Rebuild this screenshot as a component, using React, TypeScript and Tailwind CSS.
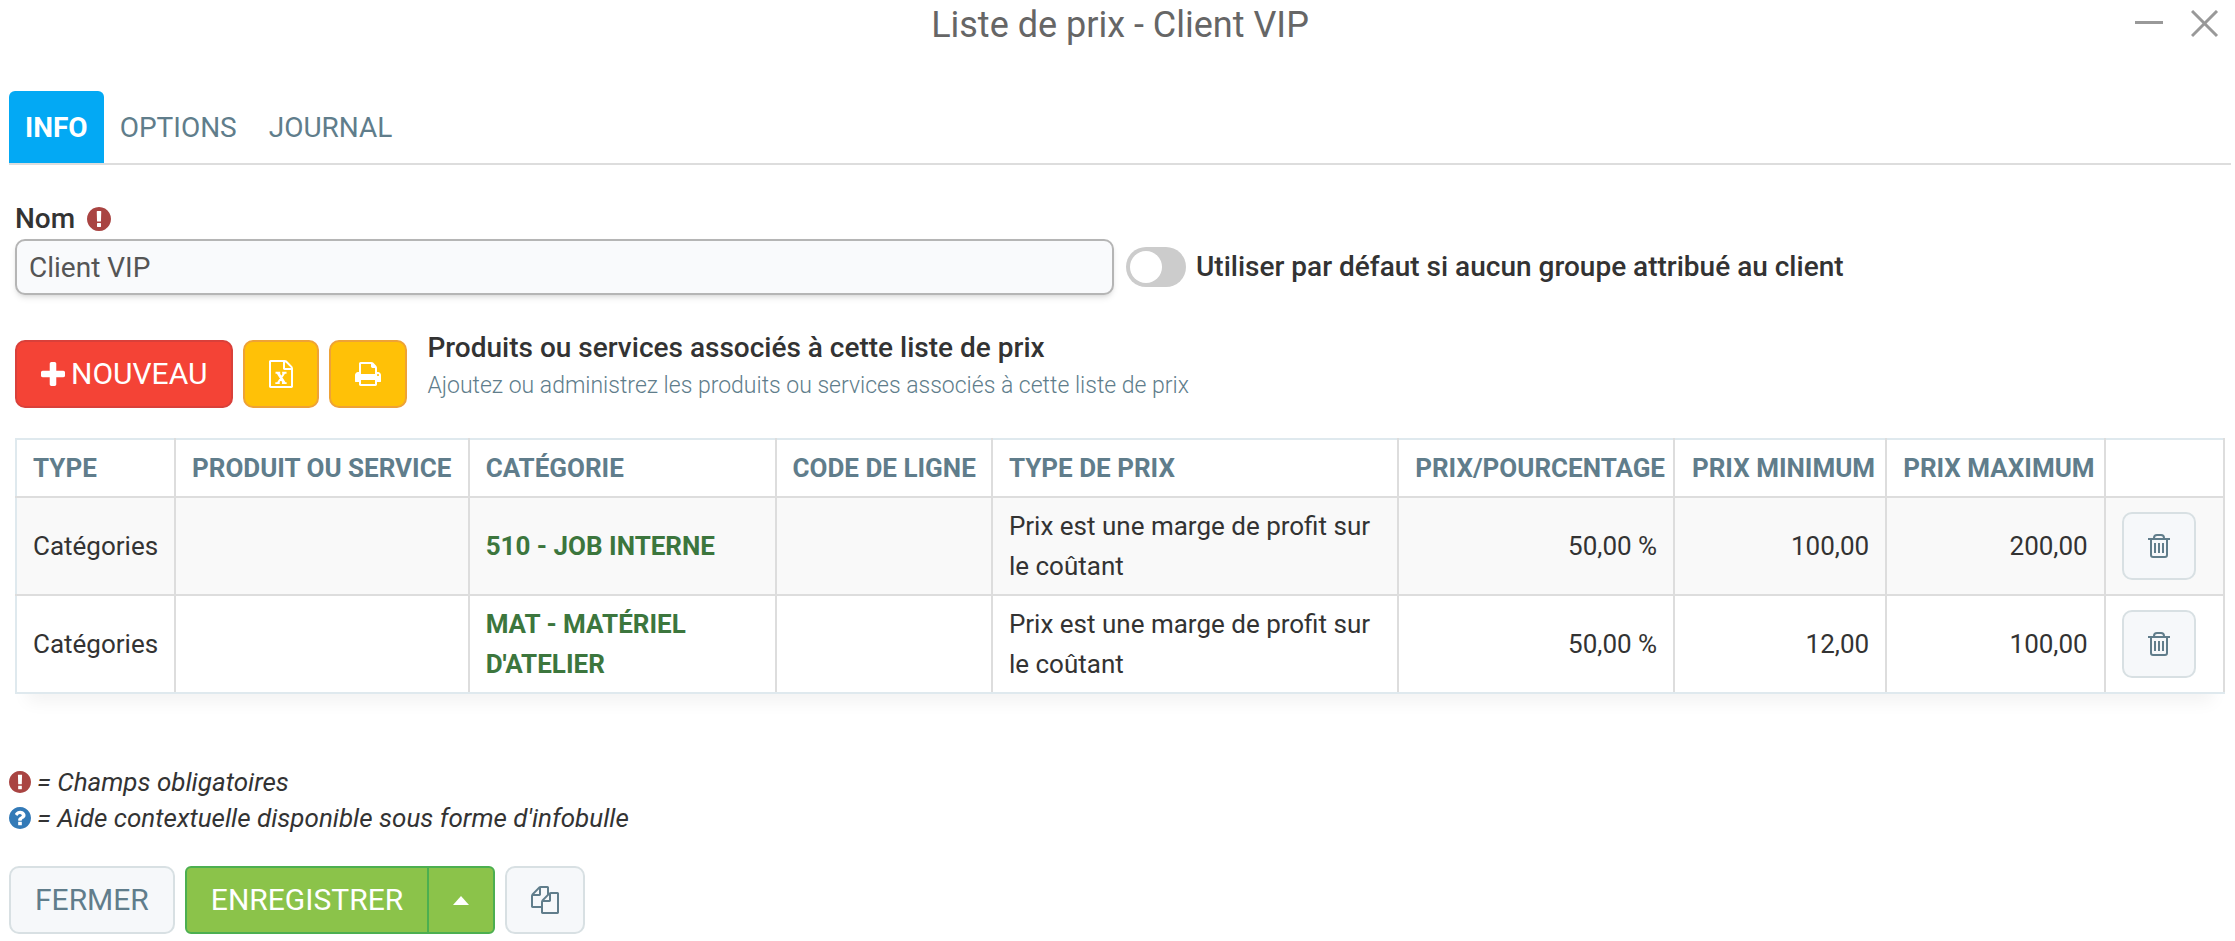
import React from 'react';
import { useState } from 'react';

interface PriceRow {
    id: number;
    type: string;
    product: string;
    category: string;
    lineCode: string;
    priceType: string;
    price: string;
    min: string;
    max: string;
}

const rows: PriceRow[] = [
    { id: 1, type: 'Catégories', product: '', category: '510 - JOB INTERNE', lineCode: '', priceType: 'Prix est une marge de profit sur le coûtant', price: '50,00 %', min: '100,00', max: '200,00' },
    { id: 2, type: 'Catégories', product: '', category: "MAT - MATÉRIEL D'ATELIER", lineCode: '', priceType: 'Prix est une marge de profit sur le coûtant', price: '50,00 %', min: '12,00', max: '100,00' },
];

const icons = {
    plus: 'M1600 736v192q0 40-28 68t-68 28h-416v416q0 40-28 68t-68 28h-192q-40 0-68-28t-28-68v-416h-416q-40 0-68-28t-28-68v-192q0-40 28-68t68-28h416v-416q0-40 28-68t68-28h192q40 0 68 28t28 68v416h416q40 0 68 28t28 68z',
    print: 'M448 1536h896v-256h-896v256zm0-640h896v-384h-160q-40 0-68-28t-28-68v-160h-640v640zm1152 64q0-26-19-45t-45-19-45 19-19 45 19 45 45 19 45-19 19-45zm128 0v416q0 13-9.500 22.500t-22.500 9.500h-224v160q0 40-28 68t-68 28h-960q-40 0-68-28t-28-68v-160h-224q-13 0-22.500-9.500t-9.500-22.500v-416q0-79 56.500-135.500t135.500-56.500h64v-544q0-40 28-68t68-28h672q40 0 88 20t76 48l152 152q28 28 48 76t20 88v256h64q79 0 135.500 56.500t56.500 135.500z',
    excel: 'M1596 380q28 28 48 76t20 88v1152q0 40-28 68t-68 28h-1344q-40 0-68-28t-28-68v-1600q0-40 28-68t68-28h896q40 0 88 20t76 48zm-444-244v376h376q-10-29-22-41l-313-313q-12-12-41-22zm384 1528v-1024h-416q-40 0-68-28t-28-68v-416h-768v1536h1280zM534 1425h282v116h-282zM958 1425h300v116h-300zM546 758h300v116h-300zM970 758h280v116h-280zM590 820h210l424 660h-210zM1040 820h150l-430 660h-150z',
    copy: 'M1696 384q40 0 68 28t28 68v1216q0 40-28 68t-68 28h-960q-40 0-68-28t-28-68v-288h-544q-40 0-68-28t-28-68v-672q0-40 20-88t48-76l408-408q28-28 76-48t88-20h416q40 0 68 28t28 68v328q68-40 128-40h416zm-544 213l-299 299h299v-299zm-640-384l-299 299h299v-299zm196 647l316-316v-416h-384v416q0 40-28 68t-68 28h-416v640h512v-256q0-40 20-88t48-76zm956 804v-1152h-384v416q0 40-28 68t-68 28h-416v640h896z',
    required: 'M896 128q209 0 385.500 103t279.500 279.500 103 385.500-103 385.500-279.500 279.500-385.500 103-385.500-103-279.500-279.500-103-385.500 103-385.500 279.500-279.500 385.500-103zm128 1247v-190q0-14-9-23.500t-22-9.500h-192q-13 0-23 10t-10 23v190q0 13 10 23t23 10h192q13 0 22-9.500t9-23.500zm-2-344l18-621q0-12-10-18-10-8-24-8h-220q-14 0-24 8-10 6-10 18l17 621q0 10 10 17.500t24 7.500h185q14 0 23.500-7.500t10.500-17.500z',
    help: 'M1024 1376v-192q0-14-9-23t-23-9h-192q-14 0-23 9t-9 23v192q0 14 9 23t23 9h192q14 0 23-9t9-23zm256-672q0-88-55.500-163t-138.500-116-170-41q-243 0-371 213-15 24 8 42l132 100q7 6 19 6 16 0 25-12 53-68 86-92 34-24 86-24 48 0 85.500 26t37.500 59q0 38-20 61t-68 45q-63 28-115.500 86.500t-52.500 125.500v36q0 14 9 23t23 9h192q14 0 23-9t9-23q0-19 21.500-49.500t54.500-49.500q32-18 49-28.500t46-35 44.500-48 28-60.500 12.500-81zm384 192q0 209-103 385.500t-279.500 279.500-385.500 103-385.500-103-279.500-279.500-103-385.500 103-385.500 279.500-279.500 385.500-103 385.500 103 279.500 279.500 103 385.500z',
};

const Icon: React.FC<{ path: string; box?: string; className?: string }> = ({ path, box = '0 0 1792 1792', className }) => (
    <svg viewBox={box} fill="currentColor" aria-hidden="true" className={className}>
        <path d={path} />
    </svg>
);

// the round icons fill their whole box
const roundBox = '128 128 1536 1536';

const TrashIcon = () => (
    <svg viewBox="0 0 24 24" fill="none" stroke="currentColor" strokeWidth="2" aria-hidden="true" className="h-6 w-6">
        <path d="M1 5h22M7 5V4q0-3 3-3h4q3 0 3 3v1" />
        <path d="M4 5v16q0 2 2 2h12q2 0 2-2V5M8 9v10M12 9v10M16 9v10" />
    </svg>
);

const lightButton = 'flex h-[68px] items-center justify-center rounded-[10px] border-2 border-[#d8e0e3] bg-[#f6f8fa] text-[#607d8b]';
const yellowButton = 'flex h-[68px] items-center justify-center rounded-[10px] border-2 border-[#eea236] bg-[#ffc107] text-white';
const tab = 'px-4 pt-[17px] pb-[15px]';
const th = 'border-2 border-[#ddd] border-t-[#dfe9ee] py-2 pl-4 pr-2.5 font-bold text-[#607d8b] whitespace-nowrap';
const td = 'border-2 border-[#ddd] px-4 py-2';

const App: React.FC = () => {
    const [name, setName] = useState('Client VIP');
    const [isDefault, setIsDefault] = useState(false);
    const [items, setItems] = useState<PriceRow[]>(rows);

    return (
        <div className="bg-white pl-[9px] pr-1 font-['Roboto',sans-serif] text-[28px] leading-10 text-[#333]">
            <header className="flex h-12 items-center">
                <div className="w-24" />
                <h1 className="flex-1 pt-0.5 text-center text-4xl text-[#666]">Liste de prix - Client VIP</h1>
                <div className="flex w-24 items-center justify-end gap-7 pr-3 text-[#999]">
                    <button type="button" aria-label="Réduire">
                        <svg viewBox="0 0 28 28" className="h-7 w-7" stroke="currentColor" strokeWidth="3"><path d="M0 12.500h28" /></svg>
                    </button>
                    <button type="button" aria-label="Fermer la fenêtre">
                        <svg viewBox="0 0 28 28" className="h-7 w-7" stroke="currentColor" strokeWidth="3"><path d="M1 1l25 25M26 1l-25 25" /></svg>
                    </button>
                </div>
            </header>

            <nav className="mt-[43px] flex border-b-2 border-[#ddd] text-[#607d8b]">
                <a href="#info" className={`${tab} rounded-t-md bg-[#03a9f4] font-bold text-white`}>INFO</a>
                <a href="#options" className={tab}>OPTIONS</a>
                <a href="#journal" className={tab}>JOURNAL</a>
            </nav>

            <main className="px-1.5">
                <div className="mt-[34px] flex items-end">
                    <div className="w-1/2 shrink-0 pr-1.5">
                        <label htmlFor="nom" className="flex items-center gap-3 font-medium">
                            Nom <Icon path={icons.required} box={roundBox} className="h-6 w-6 text-[#a94442]" />
                        </label>
                        <input
                            id="nom"
                            value={name}
                            onChange={(e) => setName(e.target.value)}
                            className="block h-14 w-full rounded-[10px] border-2 border-[#b5b5b5] bg-[#f9fafc] px-3 text-[#555] shadow-md"
                        />
                    </div>
                    <label className="flex h-14 items-center gap-2.5 pl-1.5 font-medium">
                        <input type="checkbox" checked={isDefault} onChange={(e) => setIsDefault(e.target.checked)} className="peer sr-only" />
                        <span className="flex h-10 w-[60px] items-center rounded-full bg-[#ccc] px-1 peer-checked:justify-end peer-checked:bg-[#03a9f4]">
                            <span className="h-8 w-8 rounded-full bg-white" />
                        </span>
                        Utiliser par défaut si aucun groupe attribué au client
                    </label>
                </div>

                <div className="mt-[33px] flex items-end gap-[10px]">
                    <button type="button" className="flex h-[68px] items-center gap-1.5 rounded-[10px] border-2 border-[#d9403a] bg-[#f44336] px-6 text-[30px] text-white">
                        <Icon path={icons.plus} box="192 128 1408 1408" className="h-6 w-6" />
                        NOUVEAU
                    </button>
                    <button type="button" aria-label="Exporter" className={`${yellowButton} w-[76px]`}>
                        <Icon path={icons.excel} className="h-7 w-7" />
                    </button>
                    <button type="button" aria-label="Imprimer" className={`${yellowButton} w-[78px]`}>
                        <Icon path={icons.print} className="h-7 w-7" />
                    </button>
                    <div className="pb-1 pl-2.5">
                        <h2 className="font-medium">Produits ou services associés à cette liste de prix</h2>
                        <p className="text-[23px] leading-9 font-light text-[#607d8b]">Ajoutez ou administrez les produits ou services associés à cette liste de prix</p>
                    </div>
                </div>

                <table className="mt-[30px] w-full table-fixed border-collapse text-left text-[26px] shadow-[0_20px_16px_-12px_rgba(0,0,0,0.05)] [&_tr>:first-child]:border-l-[#dfe9ee] [&_tbody>tr:last-child>td]:border-b-[#dfe9ee]">
                    <colgroup>
                        <col className="w-[7.2%]" />
                        <col className="w-[13.3%]" />
                        <col className="w-[13.9%]" />
                        <col className="w-[9.8%]" />
                        <col className="w-[18.4%]" />
                        <col className="w-[12.5%]" />
                        <col className="w-[9.6%]" />
                        <col className="w-[9.9%]" />
                        <col className="w-[5.4%]" />
                    </colgroup>
                    <thead>
                        <tr>
                            <th className={th}>TYPE</th>
                            <th className={th}>PRODUIT OU SERVICE</th>
                            <th className={th}>CATÉGORIE</th>
                            <th className={th}>CODE DE LIGNE</th>
                            <th className={th}>TYPE DE PRIX</th>
                            <th className={`${th} text-right`}>PRIX/POURCENTAGE</th>
                            <th className={`${th} text-right`}>PRIX MINIMUM</th>
                            <th className={`${th} text-right`}>PRIX MAXIMUM</th>
                            <th className={th}></th>
                        </tr>
                    </thead>
                    <tbody>
                        {items.map((row) => (
                            <tr key={row.id} className="odd:bg-[#f9f9f9]">
                                <td className={td}>{row.type}</td>
                                <td className={td}>{row.product}</td>
                                <td className={`${td} font-bold text-[#3c763d]`}>{row.category}</td>
                                <td className={td}>{row.lineCode}</td>
                                <td className={td}>{row.priceType}</td>
                                <td className={`${td} text-right`}>{row.price}</td>
                                <td className={`${td} text-right`}>{row.min}</td>
                                <td className={`${td} text-right`}>{row.max}</td>
                                <td className={td}>
                                    <button
                                        type="button"
                                        aria-label="Supprimer"
                                        onClick={() => setItems(items.filter((i) => i.id !== row.id))}
                                        className={`${lightButton} w-[74px]`}
                                    >
                                        <TrashIcon />
                                    </button>
                                </td>
                            </tr>
                        ))}
                    </tbody>
                </table>
            </main>

            <footer className="mt-[70px] text-[26px] leading-9">
                <p className="flex items-center gap-1.5 italic">
                    <Icon path={icons.required} box={roundBox} className="h-[22px] w-[22px] text-[#a94442]" />
                    = Champs obligatoires
                </p>
                <p className="flex items-center gap-1.5 italic">
                    <Icon path={icons.help} box={roundBox} className="h-[22px] w-[22px] text-[#337ab7]" />
                    = Aide contextuelle disponible sous forme d'infobulle
                </p>
                <div className="mt-[30px] flex gap-[10px] pb-1 text-[30px]">
                    <button type="button" className={`${lightButton} px-6`}>FERMER</button>
                    <div className="flex h-[68px] overflow-hidden rounded-md border-2 border-[#4caf50] bg-[#8bc34a] text-white">
                        <button type="button" className="px-6">ENREGISTRER</button>
                        <button type="button" aria-label="Autres actions" className="flex w-[66px] items-center justify-center border-l-2 border-[#4caf50]">
                            <svg viewBox="0 0 16 9" fill="currentColor" className="h-[9px] w-4"><path d="M8 0l8 9H0z" /></svg>
                        </button>
                    </div>
                    <button type="button" aria-label="Dupliquer" className={`${lightButton} w-20`}>
                        <Icon path={icons.copy} className="h-7 w-7" />
                    </button>
                </div>
            </footer>
        </div>
    );
};

export default App;
